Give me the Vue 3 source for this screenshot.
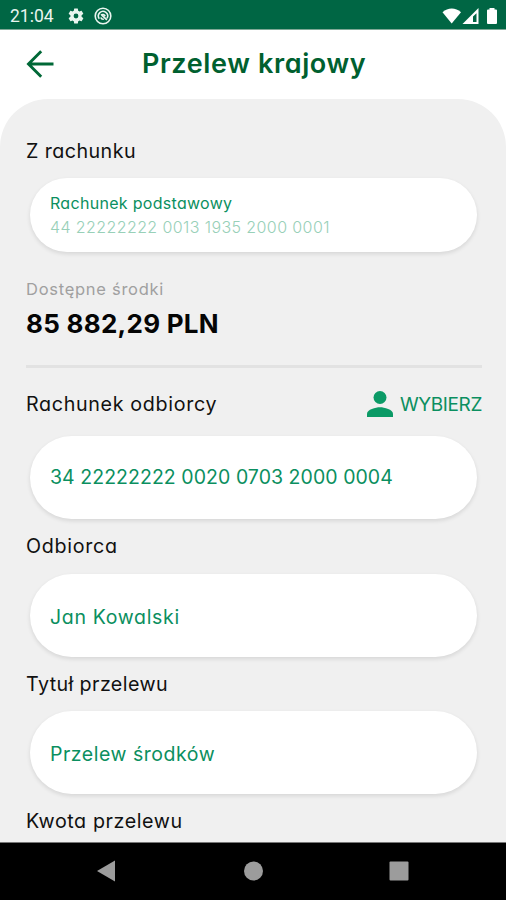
<script setup>
const fields = [
  { label: 'Odbiorca', value: 'Jan Kowalski', key: 'name', lk: 'l-name' },
  { label: 'Tytuł przelewu', value: 'Przelew środków', key: 'subject', lk: 'l-subject' },
]
</script>

<template>
  <div class="screen">
    <div class="status">
      <span class="clock">21:04</span>
      <svg class="gear" viewBox="0 0 24 24"><path fill-rule="evenodd" d="M19.4 13c.04-.3.1-.65.1-1s-.03-.7-.1-1l2.100-1.650c.2-.15.25-.42.12-.64l-2-3.460c-.12-.22-.38-.3-.6-.22l-2.500 1c-.52-.4-1.080-.73-1.700-.98L14.500 2.400A.5.5 0 0 0 14 2h-4a.5.5 0 0 0-.5.4l-.38 2.650c-.6.25-1.170.6-1.700.98l-2.500-1c-.22-.08-.48 0-.6.22l-2 3.460c-.13.22-.07.5.12.64L4.600 11c-.04.3-.1.66-.1 1s.03.7.1 1l-2.160 1.650c-.2.15-.25.42-.12.64l2 3.460c.12.22.38.3.6.22l2.500-1c.52.4 1.080.73 1.700.98l.38 2.650c.03.24.24.4.5.4h4c.25 0 .46-.18.5-.4l.38-2.650c.6-.25 1.170-.6 1.700-.98l2.500 1c.22.08.48 0 .6-.22l2-3.460c.12-.22.07-.5-.12-.64zM12 15.200a3.200 3.200 0 1 1 0-6.400 3.200 3.200 0 0 1 0 6.400z" /></svg>
      <svg class="sync" viewBox="0 0 18 18"><circle cx="9" cy="9" r="7.800" /><path d="M5.300 11.700A4.600 4.600 0 1 1 13 11.300M7.500 7.800l5.400 5M7 8.200a2.600 2.600 0 0 1 4.200 1M6.800 10.500a2.700 2.700 0 0 0 3 1.700" /></svg>
      <svg class="signals" viewBox="0 0 56 18">
        <path d="M.5 5.200C6 .2 13.500.2 19 5.200L9.700 16.500z" />
        <path fill-rule="evenodd" d="M20.500 17L36.500 1v16zM31 15h3.500V6.200L31 9.600z" />
        <path d="M47.500 1h5v1.500h1.500q1 0 1 1V16q0 1-1 1h-8q-1 0-1-1V3.500q0-1 1-1h1.500z" />
      </svg>
    </div>
    <header class="top">
      <svg class="back" viewBox="0 0 28 28"><path d="M27.500 14H2.500M15.200 1.300L2.500 14l12.700 12.700" /></svg>
      <h1>Przelew krajowy</h1>
    </header>
    <main class="sheet">
      <div class="label l-from">Z rachunku</div>
      <section class="card account">
        <div class="acc-name">Rachunek podstawowy</div>
        <div class="acc-num">44 22222222 0013 1935 2000 0001</div>
      </section>
      <div class="hint">Dostępne środki</div>
      <div class="amount">85 882,29 PLN</div>
      <hr />
      <div class="row">
        <span class="l-to">Rachunek odbiorcy</span>
        <span class="pick">
          <svg viewBox="0 0 26 26"><circle cx="13" cy="6.500" r="6.500" /><path d="M0 26v-3.200C0 18.500 8.700 16.300 13 16.300s13 2.200 13 6.500V26z" /></svg>
          <span class="choose">WYBIERZ</span>
        </span>
      </div>
      <section class="card to-num">34 22222222 0020 0703 2000 0004</section>
      <template v-for="f in fields" :key="f.key">
        <div class="label field" :class="f.lk">{{ f.label }}</div>
        <section class="card" :class="f.key">{{ f.value }}</section>
      </template>
      <div class="label field l-amount">Kwota przelewu</div>
    </main>
    <nav class="nav">
      <svg viewBox="0 0 506 58"><path d="M97 29L115 18.500V39.500z" /><circle cx="253.500" cy="29" r="9.500" /><rect x="389.500" y="19.500" width="19" height="19" rx="1" /></svg>
    </nav>
  </div>
</template>

<style>
body { margin: 0; }
</style>

<style scoped>
.screen { display: flex; flex-direction: column; width: 506px; height: 900px; overflow: hidden; background: #fff; font-family: Inter, sans-serif; font-feature-settings: "cv11"; white-space: nowrap; }
.status { box-sizing: border-box; display: flex; align-items: center; height: 30px; padding: 2px 8px 0 10px; background: #006644; border-bottom: 1px solid #7fa896; color: #e9f5ef; }
.clock { width: 57px; font: 17.500px Roboto, sans-serif; }
.gear { width: 18px; height: 18px; fill: #e9f5ef; }
.sync { width: 18px; height: 18px; margin-left: 9px; fill: none; stroke: #e9f5ef; stroke-width: 1.600; }
.signals { width: 56px; height: 18px; margin-left: auto; fill: #fff; }
.top { box-sizing: border-box; display: flex; align-items: center; height: 69px; padding: 0 0 1px 26px; }
.back { width: 28px; height: 28px; fill: none; stroke: #006837; stroke-width: 2.900; }
h1 { margin: 0 0 0 88px; font-size: 27px; font-weight: 600; line-height: 32px; letter-spacing: .62px; color: #00602f; }
.sheet { box-sizing: border-box; flex: 1; min-height: 0; padding: 38px 24px 0 26px; overflow: hidden; background: #f0f0f0; border-radius: 48px 48px 0 0; }
.label { height: 28px; font-size: 19.700px; line-height: 28px; color: #111; }
.l-from { letter-spacing: .43px; }
.card { box-sizing: border-box; display: flex; align-items: center; height: 83px; margin: 0 5px 0 4px; padding-left: 20px; border-radius: 42px; background: #fff; box-shadow: 0 2px 4px rgba(0, 0, 0, .11); font-size: 19.500px; color: #0b8f60; }
.account { height: 74px; margin-top: 13px; padding-bottom: 1px; flex-direction: column; align-items: flex-start; justify-content: center; font-size: 16px; line-height: 24px; }
.acc-name { letter-spacing: .3px; }
.acc-num { color: #98d0b8; font-weight: 300; letter-spacing: .4px; }
.hint { margin-top: 24px; height: 26px; font-size: 16.500px; line-height: 26px; letter-spacing: .72px; color: #a0a0a0; }
.amount { height: 36px; margin-top: 4px; font-size: 26px; line-height: 36px; font-weight: 700; letter-spacing: .27px; color: #050505; }
hr { height: 3px; margin: 23px 0 0; border: 0; background: #e2e2e2; }
.row { display: flex; align-items: center; justify-content: space-between; height: 28px; margin: 22px 0 18px; font-size: 19px; color: #111; }
.l-to { font-size: 19.700px; letter-spacing: .66px; }
.pick { display: flex; align-items: center; color: #0b8f60; }
.pick svg { width: 26px; height: 26px; margin-right: 7px; fill: #0b9a66; }
.choose { letter-spacing: -.38px; }
.to-num { letter-spacing: .05px; padding-bottom: 1px; }
.field { margin: 13px 0 14px; }
.l-name { letter-spacing: .7px; }
.name { letter-spacing: .67px; padding-top: 3px; }
.l-subject { letter-spacing: .4px; margin-bottom: 13px; }
.subject { letter-spacing: .52px; padding-top: 3px; }
.l-amount { letter-spacing: .58px; }
.nav { height: 58px; background: #000; border-top: 1px solid #777; box-sizing: border-box; }
.nav svg { display: block; width: 506px; height: 58px; margin-top: -1px; fill: #9c9c9c; }
</style>
